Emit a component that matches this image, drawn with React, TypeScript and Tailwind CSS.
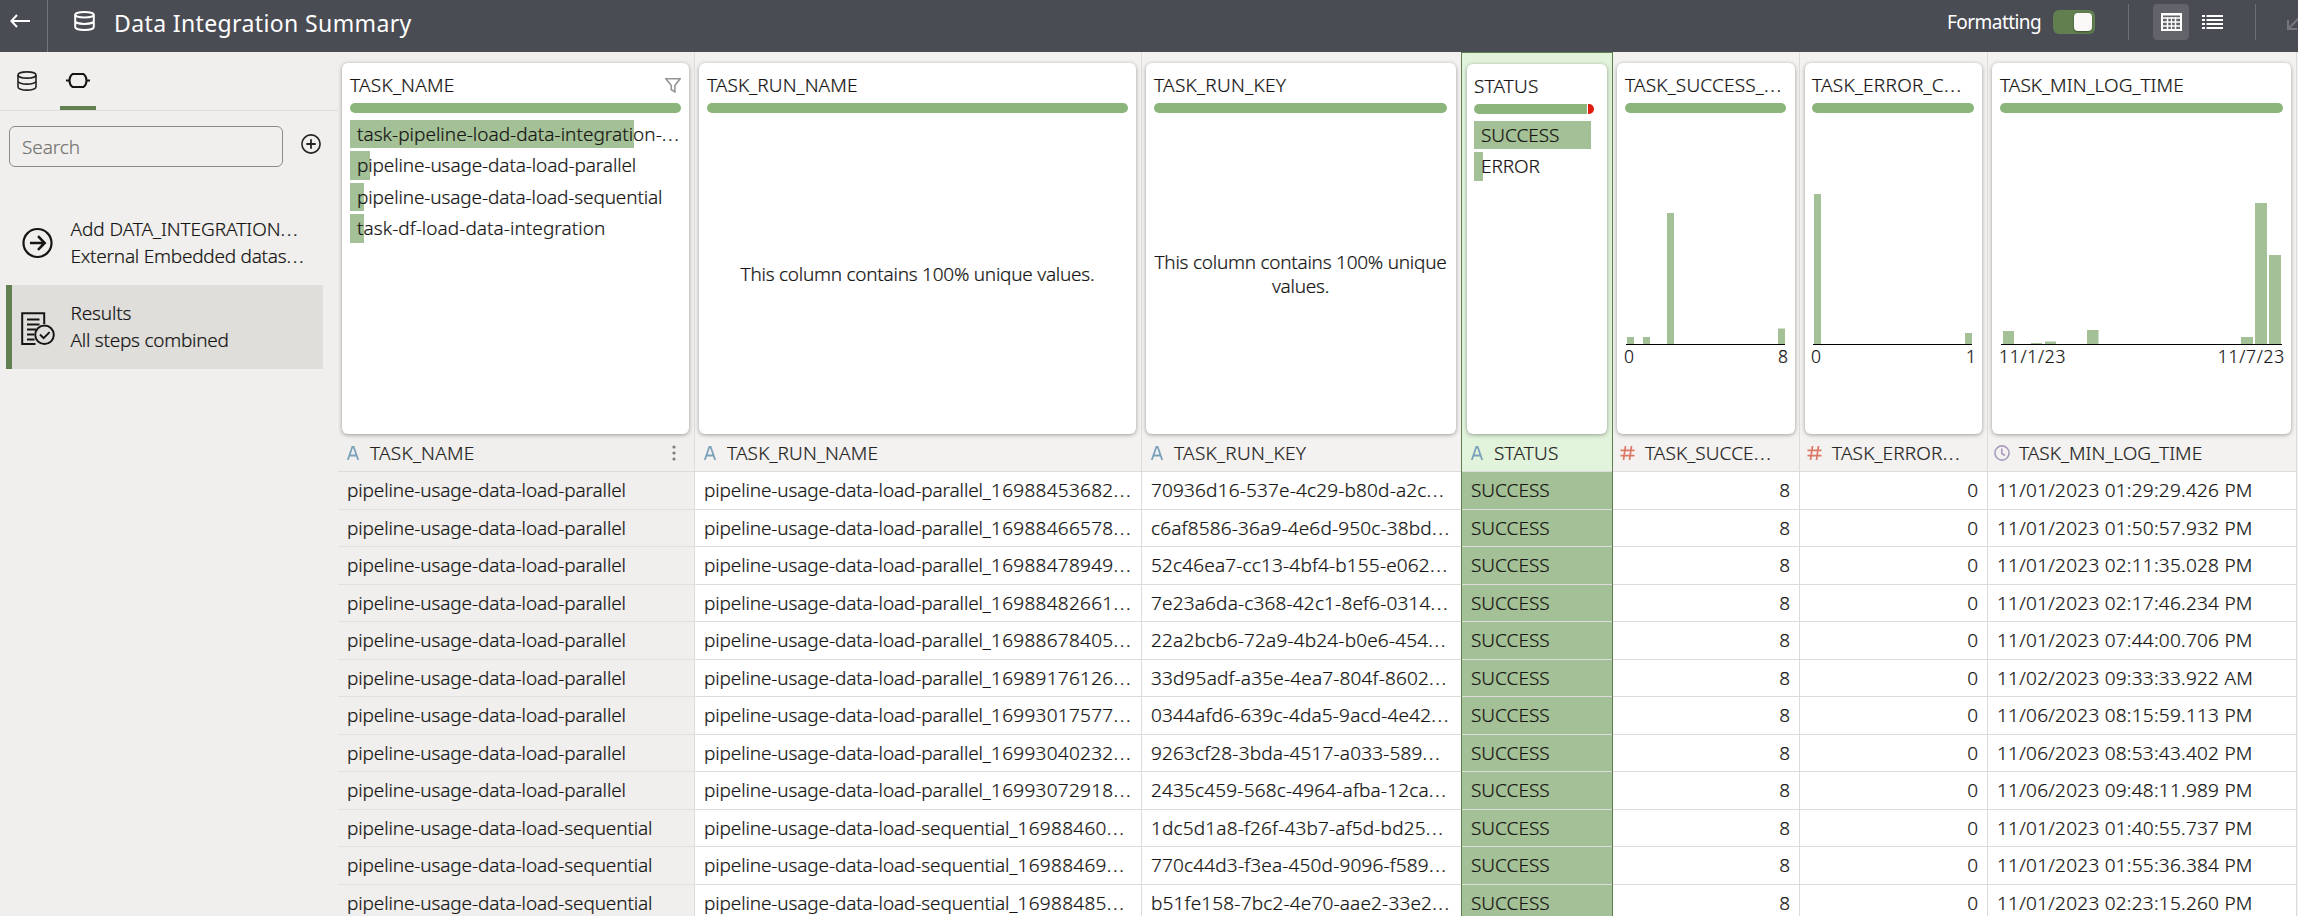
import React from "react";

type Bar = { x: number; w: number; h: number };
type Column = {
  name: string;
  cardName: string;
  headName: string;
  width: string;
  cardTracking: string;
  headTracking: string;
  type: "text" | "number" | "time";
};

const columns: Column[] = [
  { name: "TASK_NAME", cardName: "TASK_NAME", headName: "TASK_NAME", width: "w-[357px]", cardTracking: "tracking-[0.25px]", headTracking: "tracking-[0.25px]", type: "text" },
  { name: "TASK_RUN_NAME", cardName: "TASK_RUN_NAME", headName: "TASK_RUN_NAME", width: "w-[447px]", cardTracking: "tracking-[0.1px]", headTracking: "tracking-[0.15px]", type: "text" },
  { name: "TASK_RUN_KEY", cardName: "TASK_RUN_KEY", headName: "TASK_RUN_KEY", width: "w-[319px]", cardTracking: "tracking-[0.3px]", headTracking: "tracking-[0.3px]", type: "text" },
  { name: "STATUS", cardName: "STATUS", headName: "STATUS", width: "w-[152px]", cardTracking: "tracking-[0.15px]", headTracking: "tracking-[0.15px]", type: "text" },
  { name: "TASK_SUCCESS_COUNT", cardName: "TASK_SUCCESS_...", headName: "TASK_SUCCE...", width: "w-[187px]", cardTracking: "tracking-[0.2px]", headTracking: "tracking-[0.1px]", type: "number" },
  { name: "TASK_ERROR_COUNT", cardName: "TASK_ERROR_C...", headName: "TASK_ERROR...", width: "w-[188px]", cardTracking: "tracking-[0.25px]", headTracking: "tracking-[0.15px]", type: "number" },
  { name: "TASK_MIN_LOG_TIME", cardName: "TASK_MIN_LOG_TIME", headName: "TASK_MIN_LOG_TIME", width: "w-[309px]", cardTracking: "tracking-[0.05px]", headTracking: "tracking-[0.02px]", type: "time" },
];

const par = "pipeline-usage-data-load-parallel";
const seq = "pipeline-usage-data-load-sequential";

const rows: [string, string, string, string][] = [
  [par, "_16988453682...", "70936d16-537e-4c29-b80d-a2c...", "11/01/2023 01:29:29.426 PM"],
  [par, "_16988466578...", "c6af8586-36a9-4e6d-950c-38bd...", "11/01/2023 01:50:57.932 PM"],
  [par, "_16988478949...", "52c46ea7-cc13-4bf4-b155-e062...", "11/01/2023 02:11:35.028 PM"],
  [par, "_16988482661...", "7e23a6da-c368-42c1-8ef6-0314...", "11/01/2023 02:17:46.234 PM"],
  [par, "_16988678405...", "22a2bcb6-72a9-4b24-b0e6-454...", "11/01/2023 07:44:00.706 PM"],
  [par, "_16989176126...", "33d95adf-a35e-4ea7-804f-8602...", "11/02/2023 09:33:33.922 AM"],
  [par, "_16993017577...", "0344afd6-639c-4da5-9acd-4e42...", "11/06/2023 08:15:59.113 PM"],
  [par, "_16993040232...", "9263cf28-3bda-4517-a033-589...", "11/06/2023 08:53:43.402 PM"],
  [par, "_16993072918...", "2435c459-568c-4964-afba-12ca...", "11/06/2023 09:48:11.989 PM"],
  [seq, "_16988460...", "1dc5d1a8-f26f-43b7-af5d-bd25...", "11/01/2023 01:40:55.737 PM"],
  [seq, "_16988469...", "770c44d3-f3ea-450d-9096-f589...", "11/01/2023 01:55:36.384 PM"],
  [seq, "_16988485...", "b51fe158-7bc2-4e70-aae2-33e2...", "11/01/2023 02:23:15.260 PM"],
];

/** Text whose trailing dots are set a little wider than the letters. */
function Label({ text }: { text: string }) {
  if (!text.endsWith("...")) return <>{text}</>;
  return (
    <>
      {text.slice(0, -3)}
      <span className="tracking-[1.6px]">...</span>
    </>
  );
}

const DatabaseIcon = ({ className }: { className: string }) => (
  <svg viewBox="0 0 20 20" fill="none" stroke="currentColor" className={className}>
    <ellipse cx="10" cy="4" rx="9" ry="3.1" />
    <path d="M1 4v12c0 1.7 4 3.1 9 3.1s9-1.4 9-3.1V4M1 10c0 1.7 4 3.1 9 3.1s9-1.4 9-3.1" />
  </svg>
);

const HeaderDatabaseIcon = () => (
  <svg viewBox="0 0 21 20" fill="none" stroke="currentColor" strokeWidth="2" className="h-5 w-[21px]">
    <ellipse cx="10.5" cy="3.7" rx="9.3" ry="2.7" />
    <path d="M1.2 3.7v12.4c0 1.6 4 2.9 9.3 2.9s9.3-1.3 9.3-2.9V3.7M1.2 10c0 1.6 4 2.9 9.3 2.9s9.3-1.3 9.3-2.9" />
  </svg>
);

function TopBar() {
  return (
    <header className="flex h-[52px] w-full shrink-0 overflow-hidden bg-[#4a4c54] text-white">
      <div className="flex h-full w-12 shrink-0 border-r border-[#74767c] pl-[10px] pt-[14px]">
        <svg viewBox="0 0 20 14" fill="none" stroke="currentColor" strokeWidth="2" className="h-[14px] w-5">
          <path d="M20 7H1.5M7 1 1.4 7 7 13" />
        </svg>
      </div>
      <div className="pl-[26px] pt-[11px]">
        <HeaderDatabaseIcon />
      </div>
      <h1 className="whitespace-nowrap pl-[19px] pt-[7px] text-[23px] leading-8 tracking-[0.38px]">Data Integration Summary</h1>
      <div className="ml-auto flex shrink-0 pt-1">
        <span className="w-[106px] pt-[5px] text-[19px] leading-[26px] tracking-[-0.55px]">Formatting</span>
        <div className="mt-[6px] flex h-6 w-[42px] justify-end rounded-[6px] bg-[#617f4f] p-[3px]">
          <div className="h-[18px] w-[18px] rounded-[4px] bg-[#fbf9f8] shadow-[0_1px_2px_rgba(0,0,0,0.4)]" />
        </div>
        <div className="ml-[33px] h-9 w-px bg-[#6d6f75]" />
        <div className="ml-6 flex h-9 w-9 items-center justify-center rounded-[4px] bg-[#62646a]">
          <svg viewBox="0 0 21 18" fill="none" stroke="currentColor" className="h-[18px] w-[21px]">
            <path d="M0 1.25h21" strokeWidth="2.5" />
            <path d="M1 0v18M20 0v18M0 17h21" strokeWidth="2" />
            <path d="M2 5h17M2 9h17M2 13h17M6.500 4v13M14.500 4v13" strokeWidth="1.5" />
            <path d="M10.500 4v13" strokeWidth="1.2" />
          </svg>
        </div>
        <svg viewBox="0 0 21 14" fill="none" stroke="currentColor" strokeWidth="2" className="ml-[13px] mt-[11px] h-[14px] w-[21px]">
          <path d="M0 1h3M0 5h3M0 9h3M0 13h3M4.5 1H21M4.5 5H21M4.5 9H21M4.5 13H21" />
        </svg>
        <div className="ml-8 h-9 w-px bg-[#6d6f75]" />
        <div className="w-[42px] overflow-hidden pl-[31px] pt-[14px]">
          <svg viewBox="0 0 20 12" fill="none" stroke="#74767c" strokeWidth="2" className="h-3 w-5">
            <path d="M1 2v9h9M1 11 12 0" />
          </svg>
        </div>
      </div>
    </header>
  );
}

function Sidebar() {
  return (
    <aside className="flex w-[338px] shrink-0 flex-col">
      <div className="flex h-[59px] border-b border-[#dfdedc] text-[#252422]">
        <div className="w-[60px] pl-[17px] pt-[19px]">
          <DatabaseIcon className="h-5 w-5 stroke-[1.6]" />
        </div>
        <div className="flex h-[58px] w-9 justify-center border-b-4 border-[#617f4f] pt-[21px]">
          <svg viewBox="0 0 24 15" fill="none" stroke="#161513" strokeWidth="2" className="h-[15px] w-6 shrink-0">
            <path d="M6.500 1h11C19.500 2.500 20.500 4.500 20.500 7.500s-1 5-3 6.500h-11c-2-1.500-3-3.500-3-6.500S4.500 2.500 6.500 1z" />
            <path d="M0 7.5h3.5M20.5 7.5H24" />
          </svg>
        </div>
      </div>
      <div className="flex pl-[9px] pt-[15px]">
        <div className="flex h-[41px] w-[274px] items-center rounded-[6px] border border-[#8b8985] pl-3 pt-px text-[19px] tracking-[-0.1px] text-[#757471]">
          Search
        </div>
        <svg viewBox="0 0 20 20" fill="none" stroke="#252422" strokeWidth="1.6" className="ml-[18px] mt-2 h-5 w-5">
          <circle cx="10" cy="10" r="9.1" />
          <path d="M10 5.3v9.4M5.3 10h9.4" strokeWidth="1.8" />
        </svg>
      </div>
      <div className="ml-[6px] mt-[34px] flex h-[84px] w-[317px] items-center border-l-[6px] border-transparent pl-[9px]">
        <svg viewBox="0 0 34 34" fill="none" stroke="#161513" strokeWidth="2.2" className="h-[34px] w-[34px]">
          <circle cx="16.5" cy="17" r="14" />
          <path d="M9 17h14.5M17 10.2l6.7 6.8-6.7 6.8" strokeWidth="2.5" />
        </svg>
        <div className="whitespace-nowrap pb-[1px] pl-[15.5px] text-[19px] leading-[27px]">
          <p className="tracking-[-0.05px]"><Label text="Add DATA_INTEGRATION..." /></p>
          <p className="tracking-[-0.24px]"><Label text="External Embedded datas..." /></p>
        </div>
      </div>
      <div className="ml-[6px] flex h-[84px] w-[317px] items-center border-l-[6px] border-[#617f4f] bg-[#dfdedb] pl-[9px]">
        <svg viewBox="0 0 34 34" fill="none" stroke="#161513" strokeWidth="2" className="mt-[3px] h-[34px] w-[34px]">
          <path d="M14.5 32H1.2V1.2h22V12" />
          <path d="M6 7.5h12.5M6 12.5h12.5M6 17.5h9M6 22.5h7M6 27.5h7.5" />
          <circle cx="23.5" cy="22.8" r="9.3" />
          <path d="m19 22.5 3.6 3.6 6-6" />
        </svg>
        <div className="whitespace-nowrap pb-[1px] pl-[15.5px] text-[19px] leading-[27px]">
          <p className="tracking-[-0.15px]">Results</p>
          <p className="tracking-[-0.25px]">All steps combined</p>
        </div>
      </div>
    </aside>
  );
}

function QualityBar({ split = false }: { split?: boolean }) {
  return (
    <div className="flex h-[10px] shrink-0 gap-px overflow-hidden rounded-full">
      <div className="flex-1 bg-[#8bb57a]" />
      {split && <div className="w-[6px] bg-[#e01b10]" />}
    </div>
  );
}

function ValueBar({ label, width, tracking, tall = false }: { label: string; width: number; tracking: string; tall?: boolean }) {
  return (
    <div className={`relative flex items-center ${tall ? "h-[29px]" : "h-[28px]"}`}>
      <div className="absolute inset-y-0 left-0 bg-[#a4c096]" style={{ width }} />
      <span className={`relative whitespace-nowrap pl-[7px] ${tracking}`}>
        <Label text={label} />
      </span>
    </div>
  );
}

function Histogram({ width, bars, from, to, tracking }: { width: number; bars: Bar[]; from: string; to: string; tracking: string }) {
  return (
    <div className="pt-[69px]">
      <svg width={width} height="163" className="ml-px block">
        {bars.map((b) => (
          <rect key={b.x} x={b.x} y={162 - b.h} width={b.w} height={b.h} fill="#a4c096" />
        ))}
        <rect x="0" y="162" width={width} height="1" fill="#000" />
      </svg>
      <div className={`-ml-px -mr-[2px] flex justify-between text-[17.5px] leading-[23px] ${tracking}`}>
        <span>{from}</span>
        <span>{to}</span>
      </div>
    </div>
  );
}

const successBars: Bar[] = [
  { x: 1, w: 7, h: 7 },
  { x: 17, w: 7, h: 7 },
  { x: 41, w: 7, h: 131 },
  { x: 152, w: 7, h: 15.5 },
];
const errorBars: Bar[] = [
  { x: 1, w: 7, h: 150 },
  { x: 152, w: 7, h: 11 },
];
const timeBars: Bar[] = [
  { x: 2, w: 11, h: 13 },
  { x: 30, w: 11, h: 1 },
  { x: 44, w: 11, h: 2.5 },
  { x: 86, w: 11.5, h: 14 },
  { x: 240, w: 12, h: 7 },
  { x: 254, w: 12, h: 141 },
  { x: 268, w: 12, h: 89 },
];

function CardBody({ index }: { index: number }) {
  switch (index) {
    case 0:
      return (
        <div className="flex flex-col gap-[3px] pt-[7px]">
          <ValueBar label="task-pipeline-load-data-integration-..." width={284} tracking="tracking-[0.02px]" />
          <ValueBar label={par} width={20} tracking="tracking-[-0.12px]" tall />
          <ValueBar label={seq} width={14} tracking="tracking-[-0.13px]" />
          <ValueBar label="task-df-load-data-integration" width={14} tracking="tracking-[0.05px]" tall />
        </div>
      );
    case 1:
    case 2:
      return (
        <div className="-mx-1 flex flex-1 items-center justify-center text-center leading-6 tracking-[-0.25px]">
          This column contains 100% unique {index === 2 && <br />}values.
        </div>
      );
    case 3:
      return (
        <div className="flex flex-col gap-[3px] pt-[7px]">
          <ValueBar label="SUCCESS" width={117} tracking="tracking-[-0.05px]" />
          <ValueBar label="ERROR" width={9} tracking="tracking-[-0.1px]" tall />
        </div>
      );
    case 4:
      return <Histogram width={159} bars={successBars} from="0" to="8" tracking="tracking-[0]" />;
    case 5:
      return <Histogram width={159} bars={errorBars} from="0" to="1" tracking="tracking-[0]" />;
    default:
      return <Histogram width={281} bars={timeBars} from="11/1/23" to="11/7/23" tracking="tracking-[0.75px]" />;
  }
}

const cardBoxes = [
  "ml-1 mr-[5px] px-2",
  "ml-1 mr-[5px] px-2",
  "ml-1 mr-[5px] pl-2 pr-[9px]",
  "mx-[5px] pl-[7px] pr-[13px]",
  "mx-1 pl-2 pr-[9px]",
  "mx-[5px] pl-[7px] pr-2",
  "ml-1 mr-[5px] px-2",
];

function Card({ column, index }: { column: Column; index: number }) {
  return (
    <div className={`flex h-full flex-col rounded-[6px] bg-white shadow-[0_1px_4px_rgba(0,0,0,0.36)] ${cardBoxes[index]}`}>
      <div className="flex h-[40px] shrink-0 items-center justify-between pt-[5px]">
        <span className={`whitespace-nowrap ${column.cardTracking}`}>
          <Label text={column.cardName} />
        </span>
        {index === 0 && (
          <svg viewBox="0 0 16 15" fill="none" stroke="#979591" strokeWidth="1.6" className="h-[15px] w-4">
            <path d="M.9.8h14.2L9.9 7.5v6.3L6.3 11.8V7.5L.9.8z" />
          </svg>
        )}
      </div>
      <QualityBar split={index === 3} />
      <CardBody index={index} />
    </div>
  );
}

function TypeIcon({ type }: { type: Column["type"] }) {
  if (type === "text")
    return (
      <svg viewBox="0 0 12 14" fill="none" stroke="#7ba2ba" strokeWidth="1.8" className="h-[14px] w-3">
        <path d="M.8 14 5.4.8h1.2L11.2 14M2.5 9.5h7" />
      </svg>
    );
  if (type === "number")
    return (
      <svg viewBox="0 0 15 14" fill="none" stroke="#dd7765" strokeWidth="1.7" className="-ml-[2px] -mr-px h-[14px] w-[15px]">
        <path d="M.5 4.3h14M.5 9.7h14M5.5 0l-2 14M11.5 0l-2 14" />
      </svg>
    );
  return (
    <svg viewBox="0 0 16 16" fill="none" stroke="#a99bbd" strokeWidth="1.6" className="-ml-[3px] -mr-px h-4 w-4">
      <circle cx="8" cy="8" r="7.1" />
      <path d="M7.8 3.5v5l3.2 2" />
    </svg>
  );
}

const cellTracking = ["tracking-[-0.13px]", "tracking-[-0.13px]", "tracking-[0.17px]", "", "", "", "tracking-[0.25px]"];

function GridColumn({ column, index }: { column: Column; index: number }) {
  const selected = index === 3;
  const cellBg = index === 0 ? "bg-[#f0efed]" : selected ? "bg-[#a4c096]" : "bg-white";
  const line = index === 0 ? "border-[#e2e1df]" : "border-[#dddcda]";
  return (
    <section
      className={`flex shrink-0 flex-col ${column.width} ${
        selected
          ? "border-x border-t border-[#5c7e4e] bg-[#e2f3dc]"
          : index === 2
          ? "bg-[#f4f2f1]"
          : index === 0
          ? "border-r border-[#dddcda] bg-[#f0efed]"
          : "border-r border-[#dddcda] bg-[#f4f2f1]"
      }`}
    >
      <div className={`shrink-0 pt-[11px] ${selected ? "h-[381px]" : "h-[382px]"}`}>
        <Card column={column} index={index} />
      </div>
      <div className="flex h-[38px] shrink-0 items-center border-b border-[#dddcda] pl-[9px] pt-px text-[#252422]">
        <TypeIcon type={column.type} />
        <span className={`whitespace-nowrap ${column.type === "time" ? "pl-[10px]" : "pl-[11px]"} ${column.headTracking}`}>
          <Label text={column.headName} />
        </span>
        {index === 0 && (
          <svg viewBox="0 0 4 16" fill="#7f7d79" className="ml-auto mr-[18px] h-4 w-1">
            <circle cx="2" cy="2" r="1.6" />
            <circle cx="2" cy="8" r="1.6" />
            <circle cx="2" cy="14" r="1.6" />
          </svg>
        )}
      </div>
      {rows.map((r, i) => {
        const value = [r[0], r[0], r[2], "SUCCESS", "8", "0", r[3]][index];
        return (
          <div
            key={i}
            className={`flex shrink-0 items-center border-b ${i % 2 ? "h-[37px] pt-px" : "h-[38px]"} ${line} ${cellBg} ${
              column.type === "number" ? "justify-end pr-[9px]" : "pl-[9px]"
            }`}
          >
            <span className={`whitespace-nowrap ${i % 2 ? "" : "pb-px"} ${cellTracking[index]}`}>
              <Label text={value} />
              {index === 1 && (
                <span className="tracking-[0.28px]">
                  <Label text={r[1]} />
                </span>
              )}
            </span>
          </div>
        );
      })}
    </section>
  );
}

export default function App() {
  return (
    <div className="flex h-[916px] w-[2298px] flex-col overflow-hidden bg-[#f0efed] font-['Noto_Sans','Open_Sans',sans-serif] text-[#161513]">
      <TopBar />
      <div className="flex min-h-0 flex-1 font-light [-webkit-text-stroke:0.2px]">
        <Sidebar />
        <main className="flex min-w-0 flex-1 overflow-hidden bg-[#f4f2f1] text-[19px]">
          {columns.map((c, i) => (
            <GridColumn key={c.name} column={c} index={i} />
          ))}
        </main>
      </div>
    </div>
  );
}
